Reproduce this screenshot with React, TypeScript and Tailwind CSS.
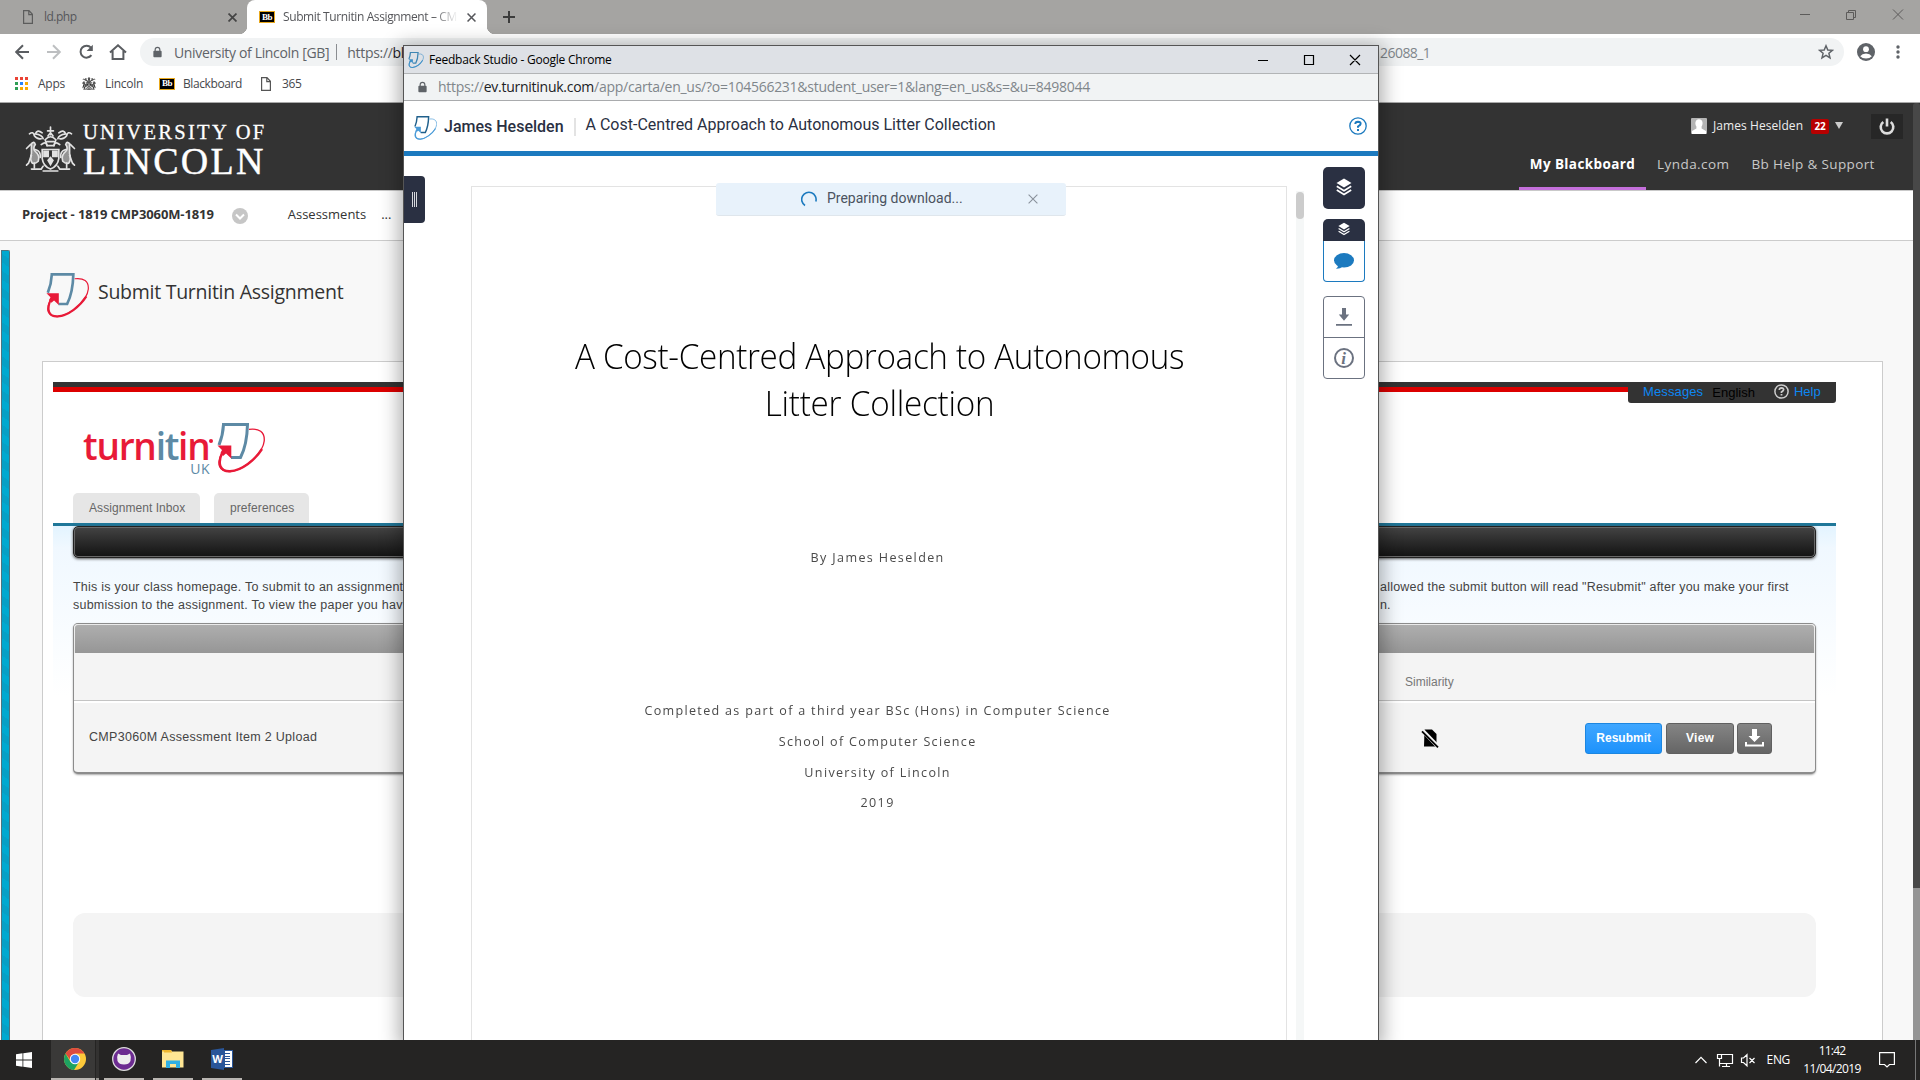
import React, { useLayoutEffect, useRef, useState } from "react";

/* Single-line text whose tracking is adjusted so that it spans w pixels. */
function T({ w, className = "", children }: { w: number; className?: string; children: React.ReactNode }) {
  const ref = useRef<HTMLSpanElement>(null);
  const [ls, setLs] = useState(0);
  useLayoutEffect(() => {
    const el = ref.current;
    if (!el) return;
    const n = (el.textContent || "").length;
    setLs((w - el.offsetWidth) / n);
  }, []);
  return (
    <span ref={ref} style={{ letterSpacing: ls + "px" }} className={"inline-block shrink-0 whitespace-pre " + className}>
      {children}
    </span>
  );
}

function TurnitinMark({ page, swoosh, className, sw = 3 }: { page: string; swoosh: string; className: string; sw?: number }) {
  return (
    <svg viewBox="0 0 48 50" className={className} fill="none">
      <path d="M2 22 Q6 12 6.5 1.5 H30.5 Q30 22 23.5 34.5 H14" stroke={page} strokeWidth={sw} />
      <path d="M32 6.3 C42 5 48 9 47.2 18 C46 30 28 47 13 48.5 C2 49 -1 41 5 30" stroke={swoosh} strokeWidth={sw * 0.45} />
      <path d="M45 26 C38 37 25 47.5 13 48.3 C3 48.6 0 41 5.5 29" stroke={swoosh} strokeWidth={sw * 0.8} />
      <path d="M0.5 22.5 H14.3 V35.5 L9 30.5 L6 33 L3.5 30 L5 27 Z" fill={swoosh} />
    </svg>
  );
}

function BbIcon() {
  return (
    <span className="flex h-[12px] w-[16px] shrink-0 items-center justify-center border border-[#e8a81c] bg-black font-['Liberation_Serif',serif] text-[9px] leading-none font-bold tracking-[-0.5px] text-white">
      Bb
    </span>
  );
}

function FileIcon({ color = "#555" }: { color?: string }) {
  return (
    <svg viewBox="0 0 10 14" className="h-[14px] w-[10px] shrink-0" fill="none" stroke={color} strokeWidth="1.2">
      <path d="M.6 .6 H6 L9.4 4.3 V13.4 H.6 Z M5.8 .6 V4.6 H9.4" />
    </svg>
  );
}

function Cross({ className, sw = 2 }: { className: string; sw?: number }) {
  return (
    <svg viewBox="0 0 10 10" className={"shrink-0 " + className} stroke="currentColor" strokeWidth={sw}>
      <path d="M.6 .6 L9.4 9.4 M9.4 .6 L.6 9.4" />
    </svg>
  );
}

function Lock({ className }: { className: string }) {
  return (
    <svg viewBox="0 0 10 12" className={"shrink-0 " + className}>
      <path d="M2.4 5 V3.4 a2.6 2.6 0 0 1 5.2 0 V5" fill="none" stroke="#5f6368" strokeWidth="1.3" />
      <rect x=".4" y="4.6" width="9.2" height="7.2" rx="1" fill="#5f6368" />
    </svg>
  );
}

function Crest({ color, className, bold = 1 }: { color: string; className: string; bold?: number }) {
  return (
    <svg viewBox="0 0 51 47" className={"shrink-0 " + className} fill="none" stroke={color} strokeLinecap="round" strokeWidth={1.7 * bold}>
      <path d="M25.5 1 V9 M22.5 5 H28.5 M23 10 L25.5 7 L28 10 M20 14 Q25.5 8 31 14 L29 20 H22 Z M22 16 H29" />
      <path d="M17 7 Q12 3 10 8 Q17 9 18 13 M34 7 Q39 3 41 8 Q34 9 33 13 M4 8 Q8 5 9 10 Q12 14 16 13 M47 8 Q43 5 42 10 Q39 14 35 13 M16 19 Q21 15 22 20 M35 19 Q30 15 29 20" />
      <path d="M17 24 H34 V33 Q33 41 25.5 44 Q18 41 17 33 Z" />
      <path d="M18 25 H24 V32 H18 Z M27 25 H33 V32 H27 Z M22 35 L25.5 31 L29 35 L25.5 41 Z" fill={color} stroke="none" />
      <path d="M6 18 Q9 15 10 19 Q7 23 10 26 Q15 30 13 36 Q10 39 7 38 Q4 34 6 28 Z M45 18 Q42 15 41 19 Q44 23 41 26 Q36 30 38 36 Q41 39 44 38 Q47 34 45 28 Z" fill={color} fillOpacity=".55" />
      <path d="M5 19 L1 23 M46 19 L50 23 M6 30 L3 38 L1 40 M45 30 L48 38 L50 40 M10 24 Q16 26 15 32 M41 24 Q35 26 36 32 M9 38 V43 M42 38 V43" />
      <path d="M6 44 H16 L18 41 M45 44 H35 L33 41 M18 46 H33" />
    </svg>
  );
}

function Layers({ className }: { className: string }) {
  return (
    <svg viewBox="0 0 16 18" className={className} fill="none" stroke="#fff">
      <path d="M8 .5 L15.5 5 L8 9.5 L.5 5 Z" fill="#fff" stroke="none" />
      <path d="M.8 8.3 L8 12.7 L15.2 8.3 M.8 12 L8 16.4 L15.2 12" strokeWidth="1.7" />
    </svg>
  );
}

function BackBrowser() {
  return (
    <>
      {/* tab strip */}
      <div className="flex h-[34px] bg-[#a5a4a2] text-[12px] text-[#55565a]">
        <div className="flex w-[247px] items-center pl-[23px]">
          <FileIcon color="#5c5c5c" />
          <T w={33} className="ml-[11px]">ld.php</T>
          <Cross className="mr-[10px] ml-auto h-[9px] w-[9px] text-[#444]" sw={1.9} />
        </div>
        <div className="relative flex w-[240px] items-center rounded-t-[8px] bg-white pl-[12px]">
          <span className="absolute bottom-0 -left-2 h-2 w-2 bg-[radial-gradient(circle_at_0_0,#a5a4a2_8px,#fff_8.5px)]" />
          <span className="absolute -right-2 bottom-0 h-2 w-2 bg-[radial-gradient(circle_at_100%_0,#a5a4a2_8px,#fff_8.5px)]" />
          <BbIcon />
          <span className="ml-[8px] w-[175px] [mask-image:linear-gradient(90deg,#000_86%,transparent)]">
            <T w={174}>Submit Turnitin Assignment – CM</T>
          </span>
          <Cross className="ml-[9px] h-[9px] w-[9px] text-[#55565a]" sw={1.7} />
        </div>
        <svg viewBox="0 0 12 12" className="mt-[11px] ml-[16px] h-3 w-3" stroke="#3c3c3c" strokeWidth="2">
          <path d="M6 0 V12 M0 6 H12" />
        </svg>
        <svg viewBox="0 0 104 12" className="mt-[9px] mr-[16px] ml-auto h-[12px] w-[104px]" fill="none" stroke="#5c5b5a">
          <path d="M0 5.5 H10 M46.5 3.5 H53.5 V10.5 H46.5 Z M48.5 3.5 V1.5 H55.5 V8.5 H53.5 M93 .5 L103 10.5 M103 .5 L93 10.5" />
        </svg>
      </div>

      {/* toolbar */}
      <div className="flex h-[36px] items-center pl-[15px]">
        <svg viewBox="0 0 112 16" className="h-4 w-[112px] shrink-0" fill="none" strokeWidth="2">
          <path d="M14 8 H1.5 M8 1.2 L1.2 8 L8 14.8" stroke="#5a5d61" />
          <path d="M32 8 H44.5 M38 1.2 L44.8 8 L38 14.8" stroke="#bdbfc1" />
          <path d="M76 3.6 A6 6 0 1 0 76.4 11.2" stroke="#5a5d61" />
          <path d="M77.8 .8 V7 H71.6 Z" fill="#5a5d61" />
          <path d="M95 8.5 L103 1.3 L111 8.5 M97.6 7 V15 H108.4 V7" stroke="#5a5d61" />
        </svg>
        <div className="ml-[13px] flex h-[28px] w-[1704px] items-center rounded-full bg-[#f1f3f4] text-[14px] text-[#5f6368]">
          <Lock className="ml-[13px] h-[12px] w-[9px]" />
          <T w={155} className="ml-[12px]">University of Lincoln [GB]</T>
          <span className="ml-[7px] h-[16px] w-px bg-[#8a8d91]" />
          <T w={57} className="ml-[10px]">https://<span className="text-[#202124]">bl</span></T>
          <T w={50} className="ml-[976px] text-[#80868b]">26088_1</T>
          <svg viewBox="0 0 16 16" className="mr-[10px] ml-auto h-4 w-4" fill="none" stroke="#5f6368" strokeWidth="1.5">
            <path d="M8 1.8 L9.8 6 L14.4 6.3 L10.9 9.3 L12 13.9 L8 11.4 L4 13.9 L5.1 9.3 L1.6 6.3 L6.2 6 Z" />
          </svg>
        </div>
        <svg viewBox="0 0 18 18" className="ml-[13px] h-[18px] w-[18px]">
          <circle cx="9" cy="9" r="9" fill="#5f6368" />
          <circle cx="9" cy="6.2" r="2.9" fill="#fff" />
          <path d="M3.2 13.2 Q5 10.6 9 10.6 Q13 10.6 14.8 13.2 Q12.8 15.6 9 15.6 Q5.200 15.6 3.200 13.2" fill="#fff" />
        </svg>
        <svg viewBox="0 0 4 14" className="ml-[21px] h-[14px] w-1" fill="#5f6368">
          <circle cx="2" cy="2" r="1.7" /><circle cx="2" cy="7" r="1.7" /><circle cx="2" cy="12" r="1.7" />
        </svg>
      </div>

      {/* bookmarks */}
      <div className="flex h-[33px] items-center border-b border-[#a9a9a9] pb-[5px] pl-[15px] text-[12px] text-[#46484c]">
        <svg viewBox="0 0 13 13" className="h-[13px] w-[13px]">
          <path d="M0 0h3v3H0zM5 0h3v3H5zM10 0h3v3h-3z" fill="#ea4335" />
          <path d="M0 5h3v3H0zM0 10h3v3H0z" fill="#2f9e55" />
          <path d="M5 5h3v3H5z" fill="#2684fc" />
          <path d="M10 5h3v3h-3zM5 10h3v3H5zM10 10h3v3h-3z" fill="#f9ab00" />
        </svg>
        <T w={27} className="ml-[10px]">Apps</T>
        <Crest color="#333" bold={1.7} className="ml-[17px] h-[13px] w-[14px]" />
        <T w={38} className="mr-[16px] ml-[9px]">Lincoln</T>
        <BbIcon />
        <T w={59} className="mr-[19px] ml-[8px]">Blackboard</T>
        <FileIcon />
        <T w={20} className="ml-[11px]">365</T>
      </div>
    </>
  );
}

function SiteHeader() {
  return (
    <>
      <header className="flex h-[88px] border-b border-[#c9c9c9] bg-[#333] pl-[25px]">
        <Crest color="#e2e2e2" className="mt-[23px] h-[46px] w-[51px]" />
        <div className="ml-[7px] flex w-[190px] flex-col items-start pt-[19px] font-['Liberation_Serif',serif] text-white">
          <T w={184} className="text-[20.5px] leading-[20px] [-webkit-text-stroke:0.3px_#fff]">UNIVERSITY OF</T>
          <T w={183} className="text-[38px] leading-[38px] [-webkit-text-stroke:0.4px_#fff]">LINCOLN</T>
        </div>
        <div className="mr-[7px] ml-auto flex w-[394px] flex-col">
          <div className="mt-[10px] flex h-[26px] items-center pl-[172px]">
            <svg viewBox="0 0 16 16" className="h-4 w-4">
              <rect width="16" height="16" rx="1" fill="#b4b4b4" />
              <path d="M8 1.200 C12 1.200 12.300 6 10.600 8.500 V10.500 L15 13 V16 H1 V13 L5.400 10.500 V8.500 C3.700 6 4 1.200 8 1.200" fill="#fff" />
            </svg>
            <T w={90} className="ml-[6px] text-[12px] text-[#eee]">James Heselden</T>
            <span className="ml-[8px] flex h-[15px] w-[18px] items-center justify-center rounded-[2px] bg-[#b80000] text-[10px] font-bold text-white">22</span>
            <svg viewBox="0 0 8 7" className="mt-[-2px] ml-[6px] h-[7px] w-2"><path d="M0 0 H8 L4 7 Z" fill="#ccc" /></svg>
            <span className="ml-[28px] flex h-[25px] w-8 items-center justify-center bg-[#272727]">
              <svg viewBox="0 0 16 17" className="h-[17px] w-4" fill="none" stroke="#ddd" strokeWidth="2.600">
                <path d="M4.300 4 A6.300 6.300 0 1 0 11.700 4 M8 .5 V8.500" />
              </svg>
            </span>
          </div>
          <nav className="flex flex-1 items-stretch text-[13.500px] text-[#c8c8c8]">
            <div className="flex w-[127px] items-start justify-center border-b-[3px] border-[#c46fdb] pt-[15px] text-white">
              <T w={105} className="font-bold">My Blackboard</T>
            </div>
            <T w={72} className="mt-[15px] ml-[11px]">Lynda.com</T>
            <T w={123} className="mt-[15px] ml-[22px]">Bb Help &amp; Support</T>
          </nav>
        </div>
      </header>
      <div className="flex h-[50px] items-center border-b border-[#ccc] bg-white pb-[2px] pl-[22px] text-[13px] text-[#333]">
        <T w={192} className="font-bold">Project - 1819 CMP3060M-1819</T>
        <svg viewBox="0 0 16 16" className="mt-[3px] ml-[18px] h-4 w-4">
          <circle cx="8" cy="8" r="8" fill="#c6c6c6" />
          <path d="M4 6.500 L8 10.500 L12 6.500" stroke="#fff" strokeWidth="2" fill="none" />
        </svg>
        <T w={78} className="ml-[40px]">Assessments</T>
        <T w={10} className="ml-[15px]">...</T>
      </div>
    </>
  );
}

function TurnitinPage() {
  return (
    <div className="flex flex-1 bg-[#f8f8f8]">
      <div className="mt-[9px] ml-px w-[9px] rounded-tr-[2px] border-x border-t border-[#4d7480] bg-[repeating-linear-gradient(35deg,#00a9d0_0_7px,#06a0c6_7px_14px)]" />
      <div className="ml-8 flex w-[1841px] flex-col">
        <div className="flex h-[120px] items-start pt-[32px] pl-[4px]">
          <TurnitinMark page="#5d8aa5" swoosh="#e81a38" className="h-[45px] w-[43px]" />
          <T w={245} className="mt-[5px] ml-[9px] text-[19.500px] leading-[28px] text-[#333]">Submit Turnitin Assignment</T>
        </div>
        <div className="flex-1 border-x border-t border-[#ccc] bg-white pt-5 pl-[10px] font-['Liberation_Sans',Arial,sans-serif] text-[12px] text-[#444]">
          <div className="w-[1783px]">
            <div className="flex h-[21px]">
              <div className="h-[10px] flex-1 border-b-[5px] border-[#dc0000] bg-[#333]" />
              <div className="flex h-[21px] w-[208px] items-center rounded-b-[3px] bg-[#333] pb-px pl-[15px] text-[13px] text-[#0d87f2]">
                <T w={60}>Messages</T>
                <T w={43} className="mt-[2px] ml-[9px] text-black">English</T>
                <svg viewBox="0 0 15 15" className="mt-[-2px] ml-[19px] h-[15px] w-[15px]" fill="none" stroke="#ccc" strokeWidth="1.500">
                  <circle cx="7.500" cy="7.500" r="6.600" />
                  <path d="M5.300 6 Q5.400 3.900 7.500 3.900 Q9.700 4 9.600 5.700 Q9.500 6.800 7.500 8 V9 M7.500 10 V11.500" strokeWidth="1.800" />
                </svg>
                <T w={27} className="ml-[5px]">Help</T>
              </div>
            </div>
            <div className="flex h-[90px] items-start pt-[20px] pl-[30px]">
              <div className="flex w-[127px] flex-col font-['Open_Sans',sans-serif]">
                <span className="flex items-start pt-[5px]">
                  <T w={126} className="text-[37px] leading-[36px] font-semibold text-[#e81a38]">
                    turn<span className="text-[#5d8aa5]">it</span>in
                  </T>
                  <span className="mt-[11px] h-1 w-1 shrink-0 rounded-full bg-[#e81a38]" />
                </span>
                <T w={20} className="self-end text-[14px] leading-[9px] text-[#5d8aa5]">UK</T>
              </div>
              <TurnitinMark page="#5d8aa5" swoosh="#e81a38" className="ml-[7px] h-[50px] w-[48px]" />
            </div>
            <div className="flex h-[30px] gap-[14px] pl-5 text-[#666]">
              <div className="flex w-[127px] items-center rounded-t-[5px] bg-[#e6e6e6] pl-4"><T w={96}>Assignment Inbox</T></div>
              <div className="flex w-[95px] items-center rounded-t-[5px] bg-[#e6e6e6] pl-4"><T w={64}>preferences</T></div>
            </div>
            <div className="border-t-[3px] border-[#1f7799] bg-[linear-gradient(180deg,#e3f4ff_0,#f0f8ff_22px,#fff_170px)] pr-5 pl-5">
              <div className="h-[32px] rounded-[5px] border border-[#222] bg-linear-to-b from-[#444] to-[#131313] shadow-[inset_0_0_0_1px_#686868,0_1px_3px_#555]" />
              <div className="mt-[20px] flex justify-between text-[12.500px] leading-[18px]">
                <div className="flex flex-col items-start">
                  <T w={330}>This is your class homepage. To submit to an assignment</T>
                  <T w={330}>submission to the assignment. To view the paper you hav</T>
                </div>
                <div className="flex w-[436px] flex-col items-start">
                  <T w={409}>allowed the submit button will read "Resubmit" after you make your first</T>
                  <T w={10}>n.</T>
                </div>
              </div>
              <div className="mt-[9px] h-[151px] rounded-[5px] border border-b-2 border-[#8c8c8c] bg-[#f4f4f4] shadow-[0_1px_2px_#aaa]">
                <div className="h-[29px] rounded-t-[4px] border-x border-t border-white/80 bg-linear-to-b from-[#aeaeae] to-[#969696]" />
                <div className="flex h-[48px] items-start border-b border-[#c4c4c4] pt-[20px] pl-[1331px] text-[#777]">
                  <T w={49} className="leading-[18px]">Similarity</T>
                </div>
                <div className="flex h-[71px] items-center border-t-2 border-white pl-[15px]">
                  <T w={228} className="text-[12.500px]">CMP3060M Assessment Item 2 Upload</T>
                  <svg viewBox="0 0 18 19" className="mt-[2px] ml-[1104px] h-[19px] w-[18px]">
                    <path d="M3.500 .5 H11 L15.500 5 V17.500 H3 Z" fill="#000" />
                    <path d="M1 1 L17 17.500" stroke="#f4f4f4" strokeWidth="4" />
                    <path d="M1 2.300 L17 18.300" stroke="#000" strokeWidth="1.800" />
                  </svg>
                  <div className="mt-px ml-[146px] flex items-center font-bold text-white">
                    <span className="flex h-[31px] w-[77px] items-center justify-center rounded-[3px] border border-[#1c86e0] bg-linear-to-b from-[#3ea6ff] to-[#1c92fb]"><T w={55}>Resubmit</T></span>
                    <span className="ml-1 flex h-[31px] w-[68px] items-center justify-center rounded-[3px] border border-[#606060] bg-linear-to-b from-[#858585] to-[#656565]"><T w={28}>View</T></span>
                    <span className="ml-[3px] flex h-[31px] w-[35px] items-center justify-center rounded-[3px] border border-[#606060] bg-linear-to-b from-[#858585] to-[#656565]">
                      <svg viewBox="0 0 19 18" className="h-[18px] w-[19px]" fill="#fff">
                        <path d="M7 0 H12 V7 H15.500 L9.500 13 L3.500 7 H7 Z" />
                        <path d="M1 13 V16.500 H18 V13" fill="none" stroke="#fff" strokeWidth="2" />
                      </svg>
                    </span>
                  </div>
                </div>
              </div>
            </div>
            <div className="mt-[139px] ml-5 h-[84px] w-[1743px] rounded-[12px] bg-[#f4f4f4]" />
          </div>
        </div>
      </div>
      <div className="mt-[-138px] ml-auto w-[7px] rounded-t-[3px] bg-[linear-gradient(180deg,#484848_785px,#959595_785px)]" />
    </div>
  );
}

function FeedbackWindow() {
  return (
    <div className="absolute top-[45px] left-[403px] flex h-[995px] w-[976px] flex-col border-x border-t border-[#555] bg-white shadow-[0_4px_18px_4px_rgba(0,0,0,.32)]">
      <div className="flex h-[28px] shrink-0 items-center border-b border-[#b2b4b6] bg-[#dee1e6] pl-[4px] text-[12px] text-black">
        <TurnitinMark page="#3f86b3" swoosh="#3e90c8" sw={4} className="h-4 w-4" />
        <T w={183} className="ml-[5px]">Feedback Studio - Google Chrome</T>
        <svg viewBox="0 0 103 12" className="mr-[17px] ml-auto h-3 w-[103px]" fill="none" stroke="#000" strokeWidth="1.200">
          <path d="M0 6.500 H10 M46.500 1.500 H55.500 V10.500 H46.500 Z M92 1 L102 11 M102 1 L92 11" />
        </svg>
      </div>
      <div className="flex h-[27px] shrink-0 items-center border-b border-[#a9abad] bg-[#f1f3f4] pb-px pl-[14px] text-[14px] text-[#80868b]">
        <Lock className="h-[12px] w-[9px]" />
        <T w={652} className="ml-[11px]">
          https://<span className="text-[#202124]">ev.turnitinuk.com</span>/app/carta/en_us/?o=104566231&amp;student_user=1&amp;lang=en_us&amp;s=&amp;u=8498044
        </T>
      </div>
      <div className="flex h-[55px] shrink-0 items-center border-b-[5px] border-[#1c7abf] pl-[10px] font-[Roboto,sans-serif] text-[16px] text-[#2a3042]">
        <TurnitinMark page="#20608c" swoosh="#4a9bd8" className="mt-[3px] h-6 w-[23px]" sw={3} />
        <T w={120} className="mt-[2px] ml-[7px] font-medium">James Heselden</T>
        <span className="mt-[2px] ml-[10px] h-[18px] w-[2px] bg-[#e3e3e3]" />
        <T w={410} className="mt-[-2px] ml-[10px]">A Cost-Centred Approach to Autonomous Litter Collection</T>
        <svg viewBox="0 0 18 18" className="mr-[11px] ml-auto h-[18px] w-[18px]" fill="none" stroke="#1c7abf">
          <circle cx="9" cy="9" r="8.200" strokeWidth="1.300" />
          <path d="M6.300 7.100 Q6.300 4.700 9 4.700 Q11.800 4.800 11.600 6.900 Q11.500 8 9 9.500 V10.800 M9 12 V14" strokeWidth="2" />
        </svg>
      </div>
      <div className="relative flex min-h-0 flex-1">
        <div className="mt-5 flex h-[47px] w-[21px] items-center justify-center gap-px rounded-r-[4px] bg-[#2a3042]">
          <i className="h-[15px] w-px bg-[#d5d7dc]" /><i className="h-[15px] w-px bg-[#d5d7dc]" /><i className="h-[15px] w-px bg-[#d5d7dc]" />
        </div>
        <div className="mt-[30px] ml-[46px] flex w-[816px] flex-col items-center border-x border-t border-[#e3e3e3] pr-[2px] text-[13.500px] leading-[20px] text-[#4a4a4a]">
          <h1 className="mt-[145px] flex scale-x-[0.95] flex-col items-center pl-[3px] text-[35px] leading-[47px] font-light text-black">
            <T w={641}>A Cost-Centred Approach to Autonomous</T>
            <T w={242}>Litter Collection</T>
          </h1>
          <div className="mt-[121px] flex scale-x-[0.93] flex-col items-center">
            <T w={144}>By James Heselden</T>
            <T w={501} className="mt-[133px]">Completed as part of a third year BSc (Hons) in Computer Science</T>
            <T w={213} className="mt-[11px]">School of Computer Science</T>
            <T w={157} className="mt-[11px]">University of Lincoln</T>
            <T w={37} className="mt-[10px]">2019</T>
          </div>
        </div>
        <div className="mt-[35px] ml-[9px] w-2 bg-[#f5f7f7]"><div className="mt-px h-[27px] rounded-full bg-[#ccc]" /></div>
        <div className="ml-[19px] flex w-[42px] flex-col pt-[11px]">
          <div className="flex h-[42px] items-center justify-center rounded-[5px] bg-[#2a3042]"><Layers className="mt-[-3px] h-[18px] w-4" /></div>
          <div className="mt-[10px] flex h-[22px] items-center justify-center rounded-t-[5px] bg-[#2a3042]"><Layers className="mt-[-3px] h-[14px] w-3" /></div>
          <div className="flex h-[41px] items-center justify-center rounded-b-[4px] border border-t-0 border-[#1c7abf]">
            <svg viewBox="0 0 20 16" className="h-4 w-5" fill="#1c7abf">
              <ellipse cx="10" cy="7.300" rx="10" ry="7.300" />
              <path d="M4 11 Q4.500 14 2 15.800 Q6 16 9 13.500 Z" />
            </svg>
          </div>
          <div className="mt-[14px] flex h-[83px] flex-col rounded-[4px] border border-[#6b7280]">
            <div className="flex h-[41px] items-center justify-center border-b border-[#6b7280]">
              <svg viewBox="0 0 16 18" className="h-[18px] w-4" fill="#6b7280">
                <path d="M6 0 H10 V6.500 H13.200 L8 12.800 L2.800 6.500 H6 Z M0 16 H16 V17.800 H0 Z" />
              </svg>
            </div>
            <div className="flex flex-1 items-center justify-center">
              <span className="flex h-5 w-5 items-center justify-center rounded-full border-2 border-[#6b7280] pr-px font-['Liberation_Serif',serif] text-[17px] leading-none font-bold text-[#6b7280] italic">i</span>
            </div>
          </div>
        </div>
        <div className="absolute top-[27px] left-[312px] flex h-[33px] w-[350px] items-center rounded-[3px] border-b border-[#dfe6ec] bg-[#e8f2fb] pl-[85px] font-[Roboto,sans-serif] text-[14px] text-[#4b5360]">
          <svg viewBox="0 0 16 16" className="h-4 w-4" fill="none" stroke="#1c7abf" strokeWidth="1.600">
            <path d="M4 14.500 A7.200 7.200 0 1 1 14.800 10.500" />
          </svg>
          <T w={136} className="mt-[-2px] ml-[10px]">Preparing download...</T>
          <Cross className="mr-[28px] ml-auto h-[10px] w-[10px] text-[#8a929c]" sw={1.1} />
        </div>
      </div>
    </div>
  );
}

function Taskbar() {
  return (
    <div className="relative flex h-[40px] shrink-0 items-center bg-[#252423] text-white">
      <svg viewBox="0 0 16 16" className="ml-4 h-4 w-4" fill="#fff">
        <path d="M0 2.200 L6.500 1.300 V7.600 H0 Z M7.300 1.200 L16 0 V7.600 H7.300 Z M0 8.400 H6.500 V14.700 L0 13.800 Z M7.300 8.400 H16 V16 L7.300 14.800 Z" />
      </svg>
      <div className="ml-[19px] flex h-[40px] w-[44px] items-center justify-center border-b-2 border-[#b9b5b1] bg-[#3a3938] pl-[4px]">
        <svg viewBox="0 0 22 22" className="h-[22px] w-[22px]">
          <circle cx="11" cy="11" r="11" fill="#fdc93a" />
          <path d="M1.500 5.500 A11 11 0 0 1 20.500 5.500 H11 L7 13 Z" fill="#dd4b3e" />
          <path d="M1.500 5.500 A11 11 0 0 0 10 22 L15 14 L6.500 14 Z" fill="#1da261" />
          <circle cx="11" cy="11" r="5.200" fill="#fff" />
          <circle cx="11" cy="11" r="4.200" fill="#4587f4" />
        </svg>
      </div>
      <div className="ml-px h-[40px] w-[3px] border-b-2 border-[#96938f] bg-[#333231]" />
      <div className="ml-[5px] flex h-[40px] w-[40px] items-center justify-center border-b-2 border-[#b9b5b1]">
        <svg viewBox="0 0 24 24" className="h-6 w-6">
          <circle cx="12" cy="12" r="11.300" fill="#6c2c91" stroke="#ddd" strokeWidth="1.300" />
          <path d="M6 6.500 L9 8 H15 L18 6.500 Q19.500 10 18.500 14 Q17 17.500 12 17.500 Q7 17.500 5.500 14 Q4.500 10 6 6.500" fill="#eee" />
        </svg>
      </div>
      <div className="ml-[9px] flex h-[40px] w-[40px] items-center justify-center border-b-2 border-[#b9b5b1]">
        <svg viewBox="0 0 22 18" className="h-[18px] w-[22px]">
          <path d="M0 0 H9 L10 1.500 H21.500 V17.500 H0 Z" fill="#ffe694" />
          <path d="M0 0 H9 L10 2.500 H2 V1.500 H0 Z" fill="#f0b72f" />
          <path d="M4 18 V10.500 H18 V18 H14 V14 H8 V18 Z" fill="#31b0e4" />
        </svg>
      </div>
      <div className="ml-[9px] flex h-[40px] w-[40px] items-center justify-center border-b-2 border-[#b9b5b1]">
        <div className="flex h-[22px] w-[22px] items-center">
          <span className="flex h-[22px] w-[13px] items-center justify-center bg-[#2a5699] text-[11px] font-bold [clip-path:polygon(0_9%,100%_0,100%_100%,0_91%)]">W</span>
          <span className="flex h-[18px] w-[9px] flex-col justify-evenly border border-[#2a5699] bg-white pr-[2px]">
            <i className="h-px bg-[#2a5699]" /><i className="h-px bg-[#2a5699]" /><i className="h-px bg-[#2a5699]" /><i className="h-px bg-[#2a5699]" /><i className="h-px bg-[#2a5699]" />
          </span>
        </div>
      </div>
      <div className="ml-auto flex h-full items-center text-[12px]">
        <svg viewBox="0 0 60 16" className="h-4 w-[60px]" fill="none" stroke="#fff" strokeWidth="1.200">
          <path d="M0.500 11 L6 5.300 L11.500 11" />
          <path d="M26 2.500 H37.500 V11.500 H25 M31.500 11.500 V14.500 M27 14.500 H35 M22.500 2.500 H26.500 V6.500 H22.500 Z M24.500 6.500 V14.500" />
          <path d="M46.500 6 H48.500 L52 2.700 V13.800 L48.500 10.500 H46.500 Z M54.500 6 L59.500 11 M59.500 6 L54.500 11" />
        </svg>
        <T w={23} className="ml-[12px]">ENG</T>
        <div className="ml-[13px] flex w-[58px] flex-col items-center leading-[18px]">
          <T w={27}>11:42</T>
          <T w={58}>11/04/2019</T>
        </div>
        <svg viewBox="0 0 16 16" className="ml-[18px] h-4 w-4" fill="none" stroke="#fff" strokeWidth="1.200">
          <path d="M.6 .6 H15.400 V12.500 H10.500 L8 15 L5.500 12.500 H.6 Z" />
        </svg>
        <span className="mr-1 ml-5 h-full w-px bg-[#777]" />
      </div>
    </div>
  );
}

export default function App() {
  return (
    <div className="relative flex h-[1080px] w-[1920px] flex-col overflow-hidden bg-white font-['Open_Sans','Noto_Sans',sans-serif]">
      <BackBrowser />
      <SiteHeader />
      <TurnitinPage />
      <FeedbackWindow />
      <Taskbar />
    </div>
  );
}
